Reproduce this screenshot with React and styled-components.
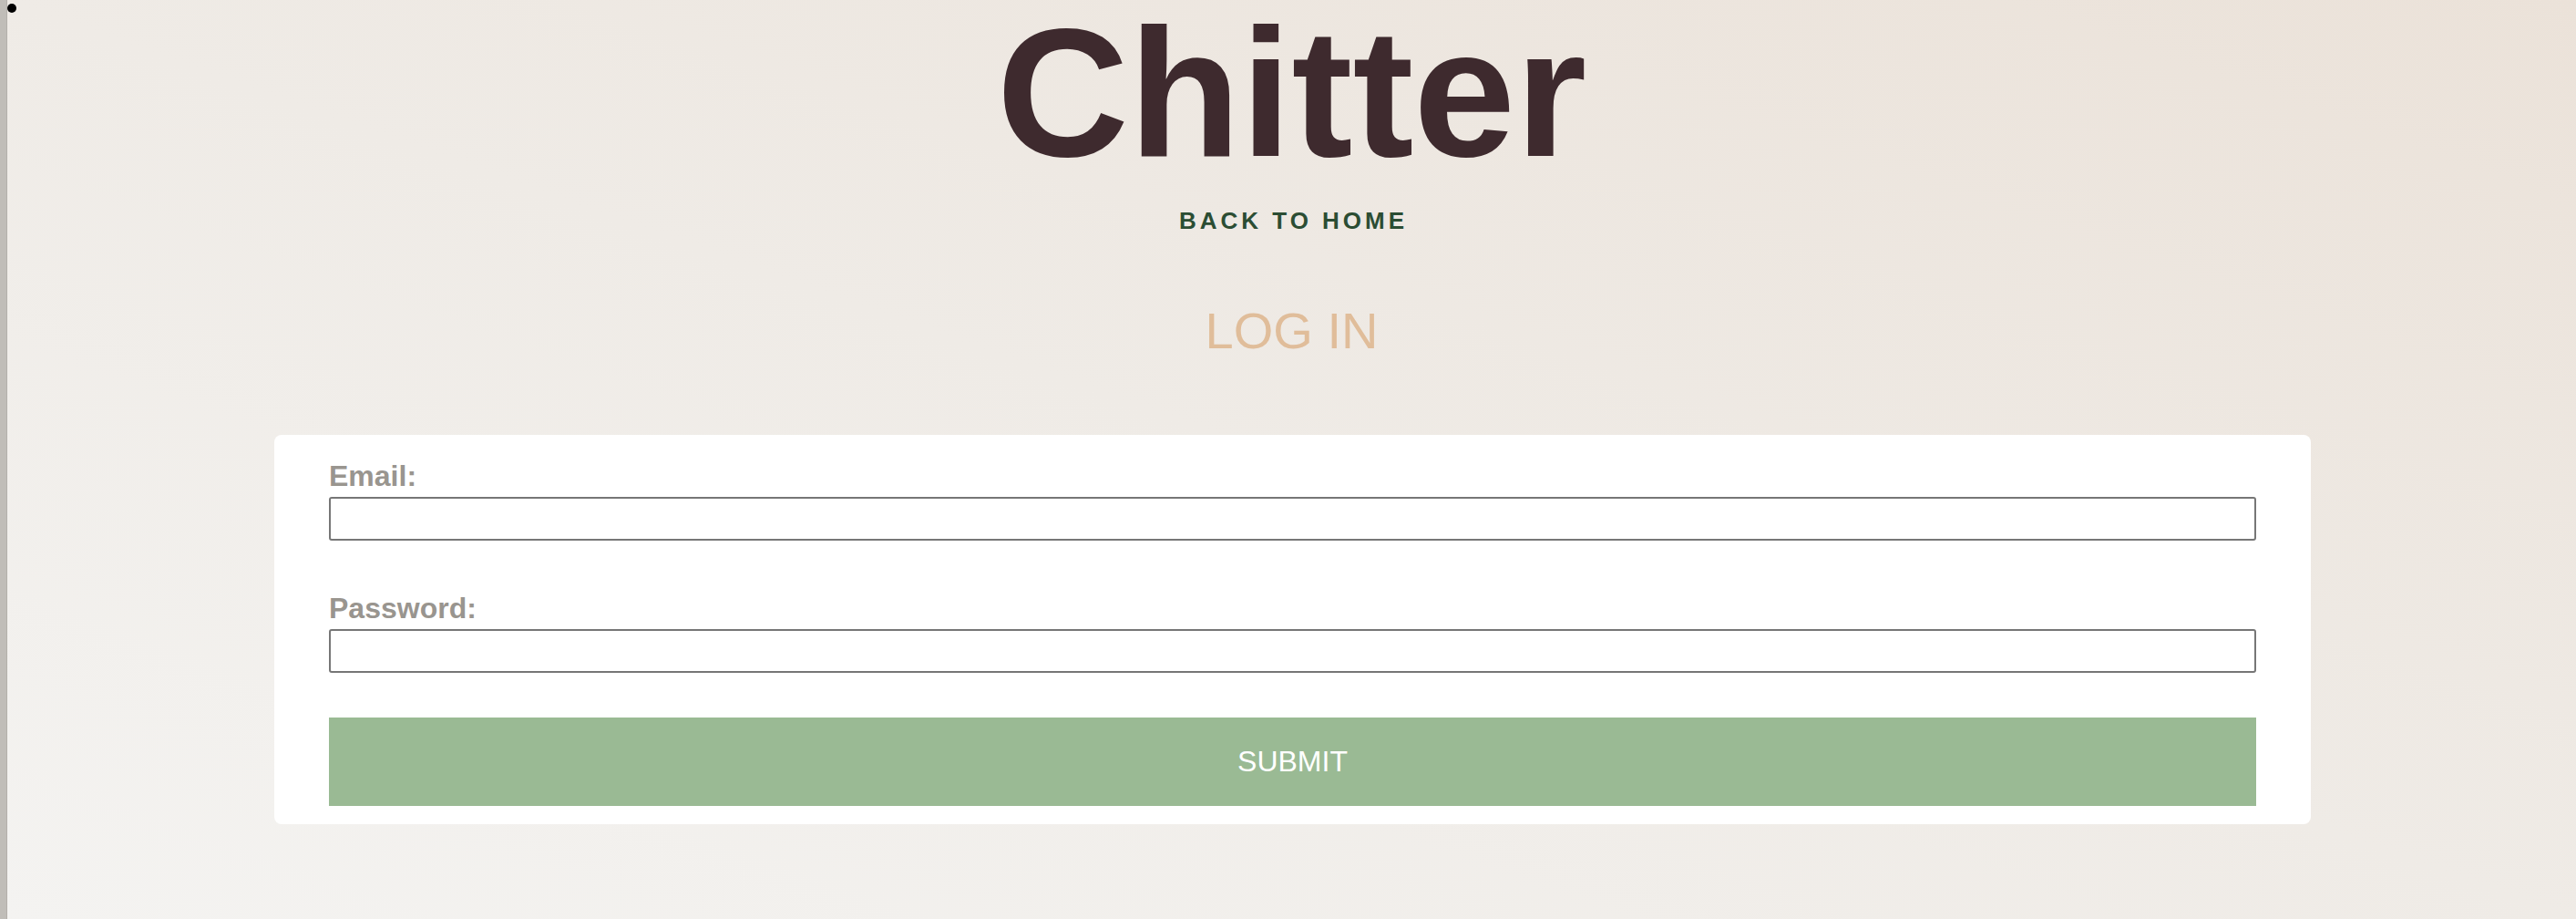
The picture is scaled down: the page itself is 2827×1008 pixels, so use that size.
import React from "react";
import styled, { createGlobalStyle } from "styled-components";

const Global = createGlobalStyle`
  html, body { margin: 0; padding: 0; }
  body { font-family: "Liberation Sans", Arial, sans-serif; }
  * { box-sizing: border-box; }
`;

const Page = styled.div`
  display: flex;
  min-height: 100vh;
  background: linear-gradient(to top right, #f4f3f1 0%, #efebe6 50%, #ebe2d9 100%);
`;

const SideBar = styled.div`
  width: 8px;
  flex: 0 0 8px;
  background: #c0bdb8;
  border-right: 1px solid #b3b0ab;
`;

const Main = styled.main`
  position: relative;
  flex: 1;
  display: flex;
  flex-direction: column;
  align-items: center;
`;

const Dot = styled.span`
  position: absolute;
  left: 0;
  top: 4px;
  width: 10px;
  height: 10px;
  border-radius: 50%;
  background: #000;
`;

const Title = styled.h1`
  margin: 1px 0 0;
  width: 100%;
  text-align: center;
  font-size: 201px;
  line-height: 201px;
  font-weight: 700;
  color: #3e2a2e;
`;

const HomeLink = styled.a`
  display: block;
  margin-top: 27px;
  font-size: 26px;
  line-height: 26px;
  font-weight: 700;
  letter-spacing: 4px;
  color: #2b4d33;
  text-decoration: none;
  padding-left: 4px;
`;

const Heading = styled.h2`
  margin: 80px 0 0;
  font-size: 56px;
  line-height: 56px;
  font-weight: 400;
  color: #e0bd9a;
`;

const Card = styled.form`
  margin-top: 86px;
  margin-left: 2px;
  width: 2235px;
  background: #fff;
  border-radius: 8px;
  padding: 29px 60px 20px;
  display: flex;
  flex-direction: column;
`;

const Label = styled.label`
  display: block;
  font-size: 32px;
  line-height: 32px;
  font-weight: 700;
  color: #99958f;
  margin-top: ${(p) => p.$gap || 0}px;
`;

const Input = styled.input`
  display: block;
  width: 100%;
  height: 48px;
  margin-top: 7px;
  border: 2px solid #767676;
  border-radius: 3px;
  background: #fff;
  padding: 0 8px;
  font-size: 24px;
  font-family: inherit;
`;

const Submit = styled.button`
  margin-top: 49px;
  height: 97px;
  width: 100%;
  border: none;
  background: #9aba94;
  color: #fff;
  font-family: "Liberation Sans", Arial, sans-serif;
  font-size: 32px;
  cursor: pointer;
`;

export default function App() {
  return (
    <>
      <Global />
      <Page>
        <SideBar />
        <Main>
          <Dot />
          <Title>Chitter</Title>
          <HomeLink href="#">BACK TO HOME</HomeLink>
          <Heading>LOG IN</Heading>
          <Card onSubmit={(e) => e.preventDefault()}>
            <Label htmlFor="email">Email:</Label>
            <Input id="email" type="email" />
            <Label htmlFor="password" $gap={58}>Password:</Label>
            <Input id="password" type="password" />
            <Submit type="submit">SUBMIT</Submit>
          </Card>
        </Main>
      </Page>
    </>
  );
}
